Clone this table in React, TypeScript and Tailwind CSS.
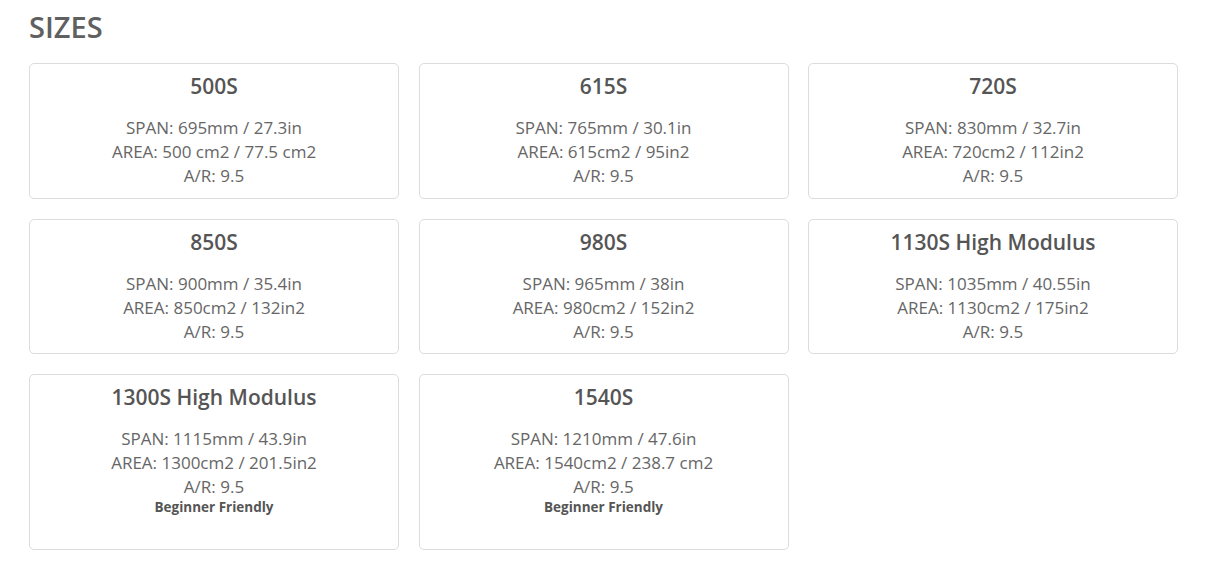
import React from 'react'

interface Size {
  name: string
  span: string
  area: string
  ar: string
  note?: string
}

const SIZES: Size[] = [
  { name: '500S', span: 'SPAN: 695mm / 27.3in', area: 'AREA: 500 cm2 / 77.5 cm2', ar: 'A/R: 9.5' },
  { name: '615S', span: 'SPAN: 765mm / 30.1in', area: 'AREA: 615cm2 / 95in2', ar: 'A/R: 9.5' },
  { name: '720S', span: 'SPAN: 830mm / 32.7in', area: 'AREA: 720cm2 / 112in2', ar: 'A/R: 9.5' },
  { name: '850S', span: 'SPAN: 900mm / 35.4in', area: 'AREA: 850cm2 / 132in2', ar: 'A/R: 9.5' },
  { name: '980S', span: 'SPAN: 965mm / 38in', area: 'AREA: 980cm2 / 152in2', ar: 'A/R: 9.5' },
  { name: '1130S High Modulus', span: 'SPAN: 1035mm / 40.55in', area: 'AREA: 1130cm2 / 175in2', ar: 'A/R: 9.5' },
  { name: '1300S High Modulus', span: 'SPAN: 1115mm / 43.9in', area: 'AREA: 1300cm2 / 201.5in2', ar: 'A/R: 9.5', note: 'Beginner Friendly' },
  { name: '1540S', span: 'SPAN: 1210mm / 47.6in', area: 'AREA: 1540cm2 / 238.7 cm2', ar: 'A/R: 9.5', note: 'Beginner Friendly' },
]

function SizeCard({ size }: { size: Size }) {
  return (
    <div className={`border border-[#dcdcdc] rounded-[5px] bg-white text-center pt-2 ${size.note ? 'pb-[33.5px]' : 'pb-[9.5px]'}`}>
      <h3 className="text-[21px] leading-[28px] font-semibold text-[#555]">{size.name}</h3>
      <div className="mt-4 text-[17px] leading-[24px] text-[#666]">
        <p>{size.span}</p>
        <p>{size.area}</p>
        <p>{size.ar}</p>
        {size.note && <p className="text-[13.5px] leading-[16px] font-bold text-[#555]">{size.note}</p>}
      </div>
    </div>
  )
}

export default function App() {
  return (
    <div className="bg-white min-h-[578px] px-[29px] pt-[10px] font-['Open_Sans',sans-serif]">
      <h2 className="text-[29px] leading-[34px] font-semibold text-[#606060]">SIZES</h2>
      <div className="mt-[19px] w-[1149px] grid grid-cols-3 gap-x-[19.5px] gap-y-[20px] items-start">
        {SIZES.map(s => (
          <SizeCard key={s.name} size={s} />
        ))}
      </div>
    </div>
  )
}
